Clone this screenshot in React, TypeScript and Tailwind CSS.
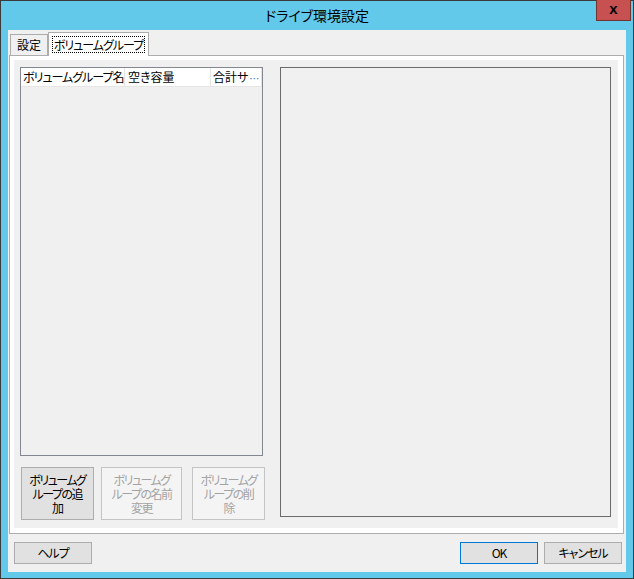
const jp = "font-['Noto_Sans_CJK_JP','Noto_Sans_CJK_SC',sans-serif] [font-feature-settings:'palt']";

function TallButton({ lines, disabled, width }: { lines: string[]; disabled?: boolean; width: string }) {
    return (
        <div
            className={`${width} h-[53px] flex flex-col items-center justify-center border text-[12px] leading-[14px] tracking-[-1.5px] whitespace-nowrap ${
                disabled ? "border-[#c4c4c4] bg-[#f4f4f4] text-[#a3a3a3]" : "border-[#adadad] bg-[#e1e1e1] text-black"
            }`}
        >
            {lines.map((l) => (
                <span key={l}>{l}</span>
            ))}
        </div>
    );
}

function DialogButton({ label, focused }: { label: string; focused?: boolean }) {
    return (
        <div
            className={`w-[78px] h-[22px] flex items-center justify-center border text-[12px] tracking-[-1px] bg-[#e1e1e1] text-black ${
                focused ? "border-[#0078d7]" : "border-[#adadad]"
            }`}
        >
            {label}
        </div>
    );
}

export default function App() {
    return (
        <div className={`relative w-[634px] h-[579px] bg-[#63c9ea] border border-[#3a3a3a] flex flex-col ${jp}`}>
            {/* title bar */}
            <div className="h-[29px] flex items-center justify-center text-[14px] text-black">
                ドライブ環境設定
            </div>
            <div className="absolute left-[595px] top-[-1px] w-[35px] h-[21px] bg-[#c75050] border border-[#6e3430] border-t-0 flex items-center justify-center">
                <span className="font-['Liberation_Sans',sans-serif] font-bold text-[15px] leading-none text-black -mt-[3px]">x</span>
            </div>

            {/* client area */}
            <div className="mx-[7px] mb-[6px] flex-1 bg-[#f0f0f0] flex flex-col">
                {/* tab strip */}
                <div className="h-[25px] flex items-end pl-[2px]">
                    <div className="w-[38px] h-[21px] border-x border-t border-[#acacac] bg-[#f0f0f0] flex items-center justify-center text-[12px] text-black">
                        設定
                    </div>
                    <div className="relative z-10 -mb-[1px] w-[101px] h-[24px] border-x border-t border-[#acacac] bg-white flex items-start justify-center pt-[3px]">
                        <span className="border border-dotted border-black px-[1px] h-[17px] flex items-center text-[12px] tracking-[-1px] whitespace-nowrap text-black">
                            ボリュームグループ
                        </span>
                    </div>
                </div>

                {/* tab page */}
                <div className="ml-[1px] w-[615px] h-[479px] border border-[#adadad] bg-white pt-[4px] pl-[4px] pr-[5px] pb-[5px] flex">
                    <div className="flex-1 bg-[#f0f0f0] flex pl-[6px] pt-[7px]">
                        <div className="w-[245px] flex flex-col">
                            {/* list view */}
                            <div className="w-[243px] h-[389px] border border-[#828790] bg-[#f0f0f0] flex flex-col">
                                <div className="h-[19px] flex bg-white border-b border-[#e5e5e5] text-[12px] text-black whitespace-nowrap">
                                    <div className="w-[104px] border-r border-[#e5e5e5] pl-[2px] flex items-center overflow-hidden tracking-[-1px]">
                                        ボリュームグループ名
                                    </div>
                                    <div className="w-[86px] border-r border-[#e5e5e5] pl-[3px] flex items-center">
                                        空き容量
                                    </div>
                                    <div className="w-[51px] border-r border-[#e5e5e5] pl-[2px] flex items-center">
                                        合計サ<span className="text-[#2f7ad6] text-[10px] ml-[1px] mt-[3px]">…</span>
                                    </div>
                                </div>
                            </div>
                            {/* buttons */}
                            <div className="mt-[11px] pl-[1px] flex">
                                <TallButton width="w-[73px]" lines={["ボリュームグ", "ループの追", "加"]} />
                                <div className="w-[7px]" />
                                <TallButton width="w-[82px]" disabled lines={["ボリュームグ", "ループの名前", "変更"]} />
                                <div className="w-[10px]" />
                                <TallButton width="w-[73px]" disabled lines={["ボリュームグ", "ループの削", "除"]} />
                            </div>
                        </div>
                        <div className="ml-[15px] w-[331px] h-[450px] border border-[#6b6b6b] bg-[#f0f0f0]" />
                    </div>
                </div>

                {/* bottom buttons */}
                <div className="mt-[8px] pl-[6px] pr-[4px] flex items-center">
                    <DialogButton label="ヘルプ" />
                    <div className="flex-1" />
                    <DialogButton label="OK" focused />
                    <div className="w-[6px]" />
                    <DialogButton label="キャンセル" />
                </div>
            </div>
        </div>
    );
}
